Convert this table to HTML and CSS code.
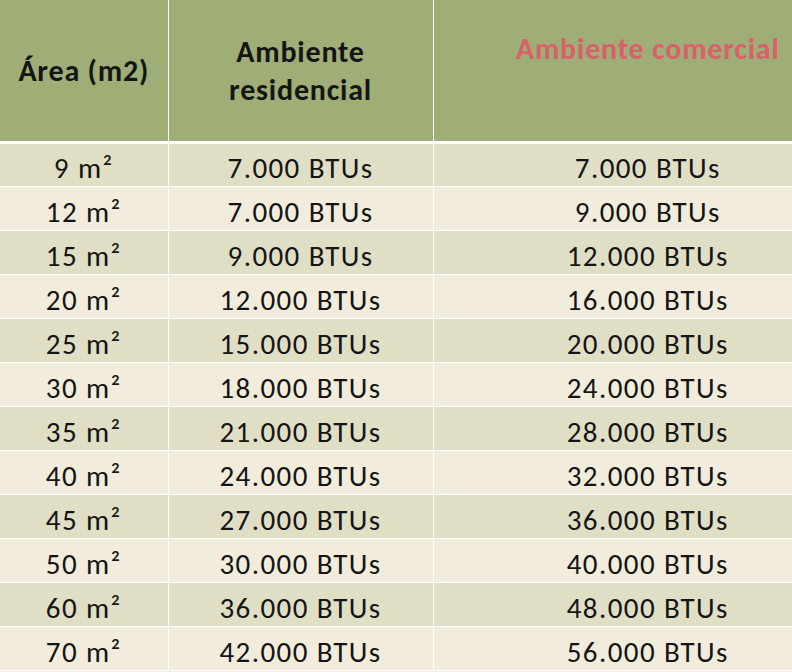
FILE: index.html
```html
<!DOCTYPE html>
<html lang="pt">
<head>
<meta charset="utf-8">
<title>Tabela BTUs</title>
<link rel="stylesheet" href="styles.css">
</head>
<body>
<div class="frame">
<table class="btu-table">
  <colgroup>
    <col class="c-area">
    <col class="c-res">
    <col class="c-com">
  </colgroup>
  <thead>
    <tr>
      <th class="h-area">Área (m2)</th>
      <th class="h-res">Ambiente<br>residencial</th>
      <th class="h-com">Ambiente comercial</th>
    </tr>
  </thead>
  <tbody>
    <tr><td>9 m²</td><td>7.000 BTUs</td><td>7.000 BTUs</td></tr>
    <tr><td>12 m²</td><td>7.000 BTUs</td><td>9.000 BTUs</td></tr>
    <tr><td>15 m²</td><td>9.000 BTUs</td><td>12.000 BTUs</td></tr>
    <tr><td>20 m²</td><td>12.000 BTUs</td><td>16.000 BTUs</td></tr>
    <tr><td>25 m²</td><td>15.000 BTUs</td><td>20.000 BTUs</td></tr>
    <tr><td>30 m²</td><td>18.000 BTUs</td><td>24.000 BTUs</td></tr>
    <tr><td>35 m²</td><td>21.000 BTUs</td><td>28.000 BTUs</td></tr>
    <tr><td>40 m²</td><td>24.000 BTUs</td><td>32.000 BTUs</td></tr>
    <tr><td>45 m²</td><td>27.000 BTUs</td><td>36.000 BTUs</td></tr>
    <tr><td>50 m²</td><td>30.000 BTUs</td><td>40.000 BTUs</td></tr>
    <tr><td>60 m²</td><td>36.000 BTUs</td><td>48.000 BTUs</td></tr>
    <tr><td>70 m²</td><td>42.000 BTUs</td><td>56.000 BTUs</td></tr>
  </tbody>
</table>
</div>
</body>
</html>
```
FILE: styles.css
```css
html, body {
  margin: 0;
  padding: 0;
  background: #f1ecdb;
}
.frame {
  width: 792px;
  height: 672px;
  overflow: hidden;
  font-family: Carlito, Calibri, Lato, "Open Sans", sans-serif;
  color: #151515;
}
.btu-table {
  border-collapse: collapse;
  table-layout: fixed;
  width: 862px;
}
.c-area { width: 168px; }
.c-res { width: 265px; }
.c-com { width: 429px; }

.btu-table th {
  background: #9fae76;
  height: 142px;
  padding: 2px 0 0 0;
  font-weight: bold;
  font-size: 30px;
  letter-spacing: 0.8px;
  line-height: 38px;
  text-align: center;
  vertical-align: middle;
  border-left: 1px solid #fff;
  border-bottom: 3px solid #fff;
  box-sizing: border-box;
}
.btu-table th:first-child { border-left: 0; }
.btu-table .h-com {
  color: #d8616a;
  vertical-align: top;
  padding-top: 30px;
}
.btu-table td {
  height: 44px;
  padding: 7px 0 0 0;
  text-align: center;
  vertical-align: middle;
  font-size: 29px;
  letter-spacing: 1.4px;
  line-height: 34px;
  border-left: 1px solid #fff;
  border-bottom: 1px solid #fff;
  box-sizing: border-box;
}
.btu-table td:first-child { border-left: 0; }
.btu-table tbody tr:nth-child(odd) td { background: #e0dec4; }
.btu-table tbody tr:nth-child(even) td { background: #f1ecdb; }
```
